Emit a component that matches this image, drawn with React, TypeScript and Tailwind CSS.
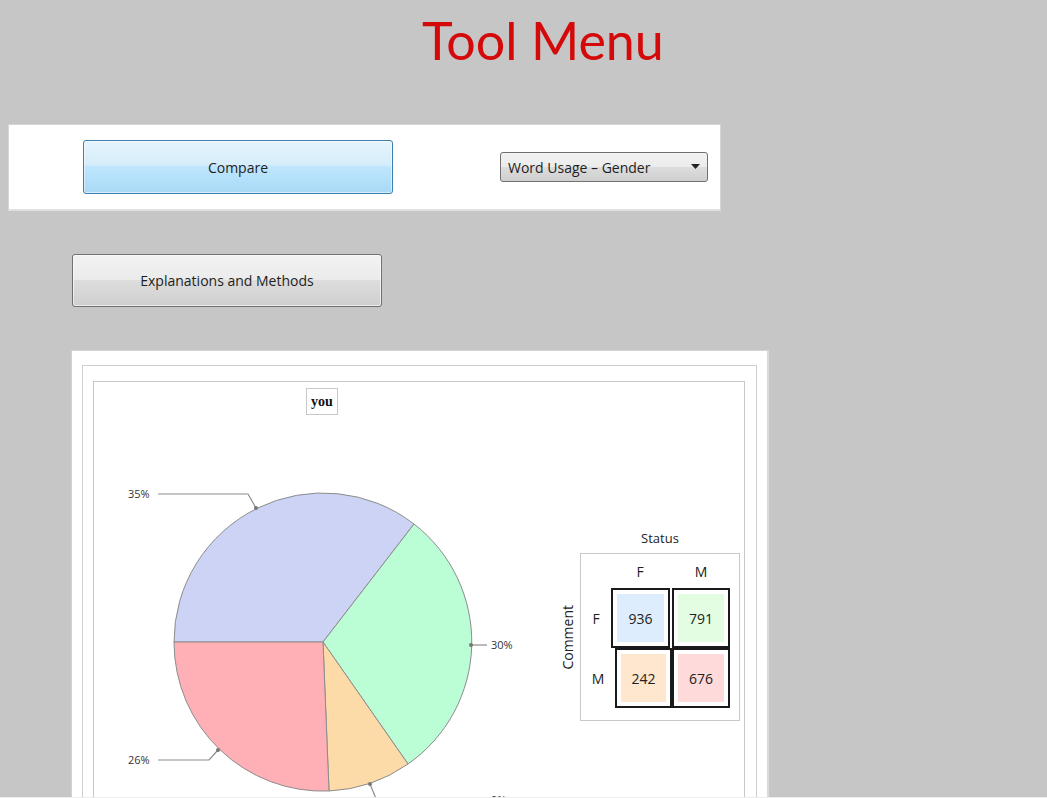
import React from "react";

const ui = { fontFamily: '"Open Sans", "Noto Sans", sans-serif' };

function Pie() {
  const lbl = { fontFamily: '"Open Sans", sans-serif', fontSize: 11, fill: "#333" };
  return (
    <svg width="460" height="400" className="block shrink-0">
      <g stroke="#8c8c8c" strokeWidth="1">
        <path d="M229,227 L80,227 A149,149 0 0 1 320,109 Z" fill="#cdd3f5" />
        <path d="M229,227 L320,109 A149,149 0 0 1 314,349 Z" fill="#bbfdd5" />
        <path d="M229,227 L314,349 A149,149 0 0 1 235,376 Z" fill="#fddba8" />
        <path d="M229,227 L235,376 A149,149 0 0 1 80,227 Z" fill="#feb0b6" />
      </g>
      <g stroke="#8c8c8c" strokeWidth="1.2" fill="none">
        <polyline points="64,79 154,79 162,93" />
        <polyline points="377,230 393,230" />
        <polyline points="64,345 115,345 124,335" />
        <polyline points="276,369 283,386" />
      </g>
      <g fill="#777">
        <circle cx="162" cy="93" r="2" />
        <circle cx="377" cy="230" r="2" />
        <circle cx="124" cy="335" r="2" />
        <circle cx="276" cy="369" r="2" />
      </g>
      <text x="34" y="83" style={lbl}>35%</text>
      <text x="397" y="234" style={lbl}>30%</text>
      <text x="34" y="349" style={lbl}>26%</text>
      <text x="397" y="389" style={lbl}>9%</text>
    </svg>
  );
}

function Cell({ v, bg, cls }: { v: string; bg: string; cls: string }) {
  return (
    <div className={`border-2 border-[#1a1a1a] p-[4px] ${cls}`}>
      <div className={`flex h-full w-full items-center justify-center text-[14px] text-[#222] ${bg}`}>{v}</div>
    </div>
  );
}

function Table() {
  return (
    <div className="mt-[114px] flex flex-col" style={ui}>
      <div className="ml-[26px] w-[160px] text-center text-[13px] leading-[19px] text-[#222]">Status</div>
      <div className="mt-[5px] flex items-center">
        <div className="flex w-[26px] justify-center">
          <span className="rotate-180 text-[14px] text-[#222] [writing-mode:vertical-rl]">Comment</span>
        </div>
        <div className="h-[168px] w-[160px] border border-[#c8c8c8] bg-white">
          <div className="flex h-[34px] items-center text-[14px] text-[#222]">
            <div className="w-[30px]" />
            <div className="w-[58px] text-center">F</div>
            <div className="ml-[3px] w-[58px] text-center">M</div>
          </div>
          <div className="flex h-[60px] items-center text-[14px] text-[#222]">
            <div className="w-[30px] text-center">F</div>
            <Cell v="936" bg="bg-[#ddedfd]" cls="h-[60px] w-[59px]" />
            <Cell v="791" bg="bg-[#e2fde2]" cls="ml-[2px] h-[60px] w-[58px]" />
          </div>
          <div className="flex h-[60px] items-center text-[14px] text-[#222]">
            <div className="w-[34px] text-center">M</div>
            <Cell v="242" bg="bg-[#fee6cf]" cls="h-[60px] w-[57px]" />
            <Cell v="676" bg="bg-[#fedada]" cls="h-[60px] w-[58px]" />
          </div>
        </div>
      </div>
    </div>
  );
}

export default function App() {
  return (
    <div className="h-[798px] w-[1047px] overflow-hidden border-b border-[#ececec] bg-[#c6c6c6]" style={ui}>
      <div
        className="pl-[422px] pt-[10px] text-[52px] leading-[60px] text-[#d40a0a]"
        style={{ fontFamily: 'Lato, "Open Sans", sans-serif' }}
      >
        Tool Menu
      </div>

      <div className="ml-[8px] mt-[54px] flex h-[87px] w-[713px] items-center border border-b-2 border-[#d6d6d6] border-b-[#e0e0e0] bg-white">
        <button className="ml-[74px] h-[54px] w-[310px] rounded-[3px] border border-[#3c7fb1] bg-[linear-gradient(to_bottom,#e6f4fc_0%,#d6edfa_45%,#bee6fd_50%,#a8d9f6_100%)] text-[14px] text-[#1e1e1e] shadow-[inset_0_0_0_1px_rgba(255,255,255,0.5)]">
          Compare
        </button>
        <div className="ml-[107px] flex h-[30px] w-[208px] items-center justify-between rounded-[3px] border border-[#707070] bg-[linear-gradient(to_bottom,#f2f2f2_0%,#ebebeb_50%,#dddddd_50%,#cfcfcf_100%)] pl-[7px] pr-[7px] text-[14px] text-[#1e1e1e]">
          <span>Word Usage – Gender</span>
          <svg width="9" height="6" viewBox="0 0 9 6"><path d="M0,0 L9,0 L4.5,5 Z" fill="#222" /></svg>
        </div>
      </div>

      <button className="ml-[72px] mt-[43px] block h-[53px] w-[310px] rounded-[3px] border border-[#707070] bg-[linear-gradient(to_bottom,#f2f2f2_0%,#ebebeb_50%,#dddddd_50%,#cfcfcf_100%)] text-[14px] text-[#1e1e1e] shadow-[inset_0_0_0_1px_rgba(255,255,255,0.6)]">
        Explanations and Methods
      </button>

      <div className="ml-[71px] mt-[43px] w-[698px] border border-r-2 border-[#d2d2d2] border-r-[#dadada] bg-white pl-[10px] pr-[10px] pt-[14px]">
        <div className="w-[675px] border-x border-t border-[#cfcfcf] pl-[10px] pr-[11px] pt-[15px]">
          <div className="h-[500px] w-[652px] border-x border-t border-[#c8c8c8]">
            <div className="pl-[212px] pt-[6px]">
              <div className="flex h-[27px] w-[32px] items-center justify-center border border-[#c8c8c8] text-[14px] font-bold text-[#111]" style={{ fontFamily: '"Liberation Serif", serif' }}>
                you
              </div>
            </div>
            <div className="flex">
              <Pie />
              <Table />
            </div>
          </div>
        </div>
      </div>
    </div>
  );
}
